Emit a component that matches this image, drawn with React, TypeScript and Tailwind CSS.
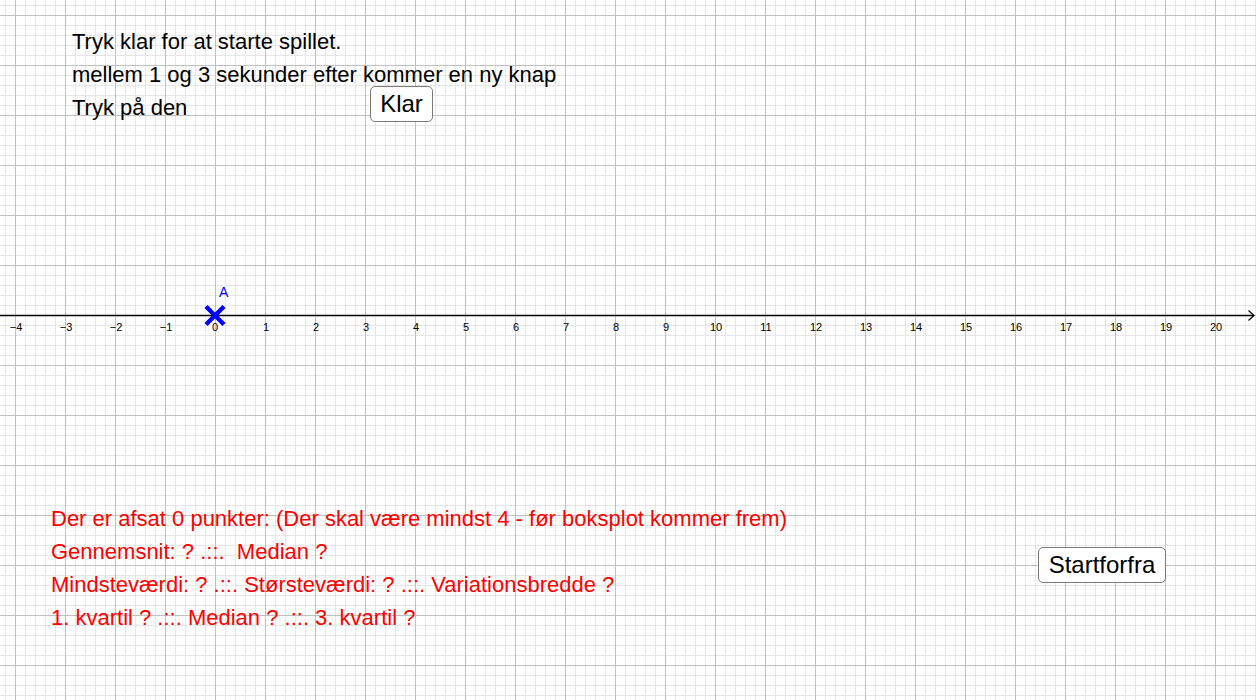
import React from "react";

const W = 1256;
const H = 700;

// grid drawing for the graphics view
function Grid() {
  const minorX: number[] = [];
  const majorX: number[] = [];
  for (let x = 5; x < W; x += 10) {
    if ((x - 15) % 50 === 0) majorX.push(x);
    else minorX.push(x);
  }
  const minorY: number[] = [];
  const majorY: number[] = [];
  for (let y = 5; y < H; y += 10) {
    if ((y - 15) % 50 === 0) majorY.push(y);
    else minorY.push(y);
  }
  return (
    <svg width={W} height={H} className="absolute inset-0 block" shapeRendering="crispEdges">
      {minorX.map((x) => (
        <line key={"mx" + x} x1={x + 0.5} y1={0} x2={x + 0.5} y2={H} stroke="#e6e6e6" strokeWidth={1} />
      ))}
      {minorY.map((y) => (
        <line key={"my" + y} x1={0} y1={y + 0.5} x2={W} y2={y + 0.5} stroke="#e6e6e6" strokeWidth={1} />
      ))}
      {majorX.map((x) => (
        <line key={"Mx" + x} x1={x + 0.5} y1={0} x2={x + 0.5} y2={H} stroke="#c0c0c0" strokeWidth={1} />
      ))}
      {majorY.map((y) => (
        <line key={"My" + y} x1={0} y1={y + 0.5} x2={W} y2={y + 0.5} stroke="#c0c0c0" strokeWidth={1} />
      ))}
      {/* x axis */}
      <line x1={0} y1={315.5} x2={1254} y2={315.5} stroke="#000" strokeWidth={1.5} shapeRendering="auto" />
      <polyline points="1248.5,310.5 1254,315.5 1248.5,320.5" fill="none" stroke="#000" strokeWidth={1.2} shapeRendering="auto" />
      {/* point A */}
      <g stroke="#0000ff" strokeWidth={4.5} strokeLinecap="butt" shapeRendering="auto">
        <line x1={206} y1={306.5} x2={224} y2={324.5} />
        <line x1={224} y1={306.5} x2={206} y2={324.5} />
      </g>
    </svg>
  );
}

function GgbButton({ label, className }: { label: string; className: string }) {
  return (
    <button
      className={`absolute flex items-center justify-center bg-white border border-[#7a7a7a] rounded-[5px] text-[24px] text-black leading-none ${className}`}
    >
      {label}
    </button>
  );
}

export default function App() {
  const ticks: number[] = [];
  for (let n = -4; n <= 20; n++) ticks.push(n);

  return (
    <div
      className="relative w-[1256px] h-[700px] overflow-hidden bg-white"
      style={{ fontFamily: '"Liberation Sans", Arial, sans-serif' }}
    >
      <Grid />

      {/* axis numbers, one 50px cell per unit */}
      <div className="absolute left-[-10px] top-[320px] flex text-[11px] leading-[14px] text-black">
        {ticks.map((n) => (
          <span key={n} className={`w-[50px] text-center ${n === 0 ? "" : "pl-[2px]"}`}>
            {n < 0 ? "\u2212" + Math.abs(n) : n}
          </span>
        ))}
      </div>

      <span className="absolute left-[219px] top-[284px] text-[14px] leading-[16px] text-[#0000ff]">A</span>

      {/* instructions */}
      <div className="absolute left-[72px] top-[25px] flex flex-col text-[22px] leading-[33px] text-black">
        <p>Tryk klar for at starte spillet.</p>
        <p>mellem 1 og 3 sekunder efter kommer en ny knap</p>
        <p>Tryk på den</p>
      </div>

      <GgbButton label="Klar" className="left-[370px] top-[86px] w-[63px] h-[36px]" />
      <GgbButton label="Startforfra" className="left-[1038px] top-[547px] w-[128px] h-[36px]" />

      {/* statistics */}
      <div className="absolute left-[51px] top-[502px] flex flex-col text-[22px] leading-[33px] text-[#ff0000] whitespace-pre">
        <p>Der er afsat 0 punkter: (Der skal være mindst 4 - før boksplot kommer frem)</p>
        <p>Gennemsnit: ? .::.  Median ?</p>
        <p>Mindsteværdi: ? .::. Størsteværdi: ? .::. Variationsbredde ?</p>
        <p>1. kvartil ? .::. Median ? .::. 3. kvartil ?</p>
      </div>
    </div>
  );
}
